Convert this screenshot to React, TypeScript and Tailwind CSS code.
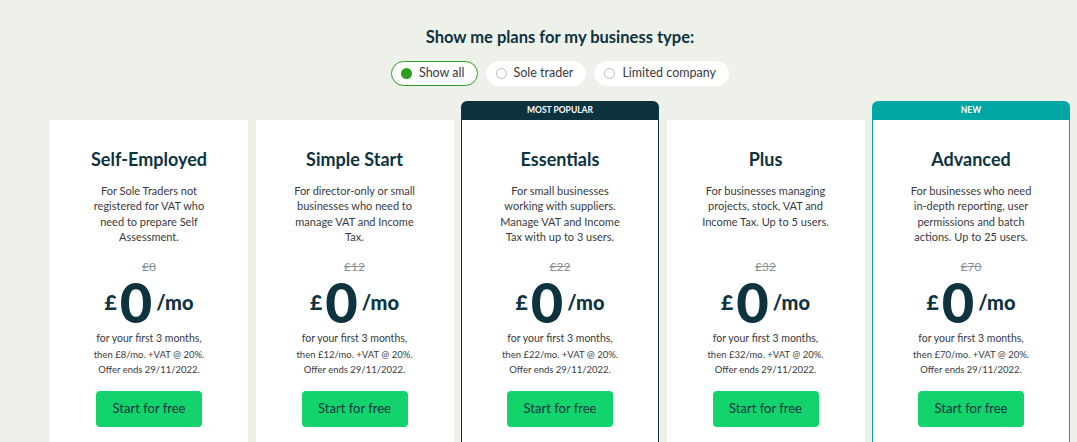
const plans = [
  {
    name: "Self-Employed",
    desc: ["For Sole Traders not", "registered for VAT who", "need to prepare Self", "Assessment."],
    was: "£8",
    then: "then £8/mo. +VAT @ 20%.",
  },
  {
    name: "Simple Start",
    desc: ["For director-only or small", "businesses who need to", "manage VAT and Income", "Tax."],
    was: "£12",
    then: "then £12/mo. +VAT @ 20%.",
  },
  {
    name: "Essentials",
    desc: ["For small businesses", "working with suppliers.", "Manage VAT and Income", "Tax with up to 3 users."],
    was: "£22",
    then: "then £22/mo. +VAT @ 20%.",
    badge: "MOST POPULAR",
    tone: "dark",
  },
  {
    name: "Plus",
    desc: ["For businesses managing", "projects, stock, VAT and", "Income Tax. Up to 5 users."],
    was: "£32",
    then: "then £32/mo. +VAT @ 20%.",
  },
  {
    name: "Advanced",
    desc: ["For businesses who need", "in-depth reporting, user", "permissions and batch", "actions. Up to 25 users."],
    was: "£70",
    then: "then £70/mo. +VAT @ 20%.",
    badge: "NEW",
    tone: "teal",
  },
];

function Pill({ label, active }: { label: string; active?: boolean }) {
  return (
    <div
      className={
        "flex h-[25px] items-center gap-[7px] rounded-full bg-white pl-[9px] pr-[12px] text-[12.5px] text-[#393a3d] " +
        (active ? "border border-[#2ca01c]" : "border border-white")
      }
    >
      {active ? (
        <span className="h-[11px] w-[11px] rounded-full bg-[#2ca01c]" />
      ) : (
        <span className="h-[11px] w-[11px] rounded-full border border-[#babec5]" />
      )}
      {label}
    </div>
  );
}

function Card({ plan }: { plan: (typeof plans)[number] }) {
  const border =
    plan.tone === "dark"
      ? "border-x border-[#0d333f]"
      : plan.tone === "teal"
        ? "border-x border-[#00a6a4]"
        : "";
  return (
    <div className="flex flex-col">
      {plan.badge ? (
        <div
          className={
            "flex h-[19px] items-center justify-center rounded-t-[6px] text-[8.5px] font-bold text-white " +
            (plan.tone === "dark" ? "bg-[#0d333f]" : "bg-[#00a6a4]")
          }
        >
          {plan.badge}
        </div>
      ) : (
        <div className="h-[19px]" />
      )}
      <div className={"flex h-[340px] flex-col items-center bg-white pt-[28px] " + border}>
        <h2 className="text-[18px] font-bold leading-[22px] text-[#0d333f]">{plan.name}</h2>
        <p className="mt-[13px] h-[62px] text-center text-[11px] leading-[15.3px] text-[#393a3d]">
          {plan.desc.map((l) => (
            <span key={l} className="block">
              {l}
            </span>
          ))}
        </p>
        <div className="mt-[15px] text-[12px] leading-[14px] text-[#8d9096] line-through">{plan.was}</div>
        <div className="mt-[1px] flex h-[54px] items-center text-[#0d333f]">
          <span className="mr-[3px] text-[21px] font-black leading-[24px]">£</span>
          <span className="text-[56px] font-black leading-[44px]">0</span>
          <span className="ml-[4px] text-[20px] font-black leading-[24px]">/mo</span>
        </div>
        <div className="mt-[1px] text-[10.5px] leading-[16px] text-[#393a3d]">for your first 3 months,</div>
        <div className="mt-[1px] text-[9.5px] leading-[16px] text-[#393a3d]">{plan.then}</div>
        <div className="text-[9.5px] leading-[14px] text-[#393a3d]">Offer ends 29/11/2022.</div>
        <button className="mt-[14px] h-[36px] w-[106px] rounded-[4px] bg-[#12d36c] text-[13px] text-[#0d333f]">
          Start for free
        </button>
      </div>
    </div>
  );
}

export default function App() {
  return (
    <div className="h-[442px] overflow-hidden bg-[#edf1ea] pl-[50px] pr-[7px] font-['Lato',sans-serif]">
      <h1 className="pt-[27px] text-center text-[16.5px] font-bold leading-[20px] text-[#0d333f]">
        Show me plans for my business type:
      </h1>
      <div className="mt-[14px] flex justify-center gap-[8px]">
        <Pill label="Show all" active />
        <Pill label="Sole trader" />
        <Pill label="Limited company" />
      </div>
      <div className="mt-[15px] grid grid-cols-5 gap-[7.5px]">
        {plans.map((p) => (
          <Card key={p.name} plan={p} />
        ))}
      </div>
    </div>
  );
}
